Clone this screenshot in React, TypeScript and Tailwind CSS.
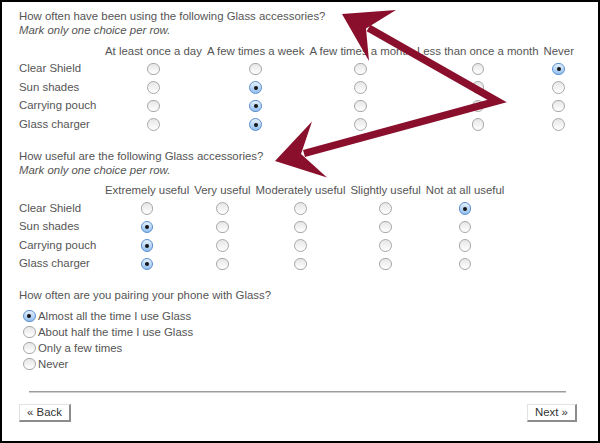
import React from "react";

const Radio = ({ on }: { on?: boolean }) => (
  <span
    className={`inline-flex h-[12.5px] w-[12.5px] items-center justify-center rounded-full border align-middle ${
      on
        ? "border-[#5b8fcf] bg-linear-to-b from-[#e4f0fc] to-[#93c0ef]"
        : "border-[#a8a8a8] bg-linear-to-b from-[#e6e6e6] to-[#ffffff]"
    }`}
  >
    {on && <span className="h-[4px] w-[4px] rounded-full bg-[#151515]" />}
  </span>
);

const Matrix = ({
  cols,
  rows,
}: {
  cols: string[];
  rows: { label: string; pick: number }[];
}) => (
  <table className="mt-[5px] border-collapse">
    <thead>
      <tr className="h-[17px]">
        <th className="w-[83.5px] p-0" />
        {cols.map((c) => (
          <th key={c} className="whitespace-nowrap px-[2.5px] py-0 text-center font-normal">
            {c}
          </th>
        ))}
      </tr>
    </thead>
    <tbody>
      {rows.map((r) => (
        <tr key={r.label} className="h-[18.5px]">
          <td className="w-[83.5px] whitespace-nowrap p-0 text-left">{r.label}</td>
          {cols.map((c, i) => (
            <td key={c} className="p-0 text-center">
              <Radio on={i === r.pick} />
            </td>
          ))}
        </tr>
      ))}
    </tbody>
  </table>
);

const Arrows = () => (
  <svg
    className="pointer-events-none absolute left-[-2px] top-[-2px] h-[443px] w-[600px]"
    viewBox="0 0 600 443"
  >
    <polyline
      points="368.5,28 497,101 304,153.5"
      fill="none"
      stroke="#8a0f2c"
      strokeWidth="7.5"
      strokeLinejoin="miter"
      strokeMiterlimit="6"
    />
    <polygon points="342,14 396,10 366,28.5 369,61" fill="#8a0f2c" />
    <polygon points="275,161 312,121.5 301,154 327,177.5" fill="#8a0f2c" />
  </svg>
);

const App = () => {
  const often = ["At least once a day", "A few times a week", "A few times a month", "Less than once a month", "Never"];
  const useful = ["Extremely useful", "Very useful", "Moderately useful", "Slightly useful", "Not at all useful"];
  const pairing = ["Almost all the time I use Glass", "About half the time I use Glass", "Only a few times", "Never"];

  return (
    <div
      className="relative h-[443px] w-[600px] overflow-hidden border-2 border-black bg-white text-[11.4px] leading-[14px] text-[#555]"
      style={{ fontFamily: '"Liberation Sans", Arial, sans-serif' }}
    >
      <div className="pl-[17px] pr-[21px] pt-[7px]">
        <p>How often have been using the following Glass accessories?</p>
        <p className="italic">Mark only one choice per row.</p>
        <Matrix
          cols={often}
          rows={[
            { label: "Clear Shield", pick: 4 },
            { label: "Sun shades", pick: 1 },
            { label: "Carrying pouch", pick: 1 },
            { label: "Glass charger", pick: 1 },
          ]}
        />

        <p className="mt-[15.5px]">How useful are the following Glass accessories?</p>
        <p className="italic">Mark only one choice per row.</p>
        <Matrix
          cols={useful}
          rows={[
            { label: "Clear Shield", pick: 4 },
            { label: "Sun shades", pick: 0 },
            { label: "Carrying pouch", pick: 0 },
            { label: "Glass charger", pick: 0 },
          ]}
        />

        <p className="mt-[15.5px]">How often are you pairing your phone with Glass?</p>
        <div className="mt-[6px] flex flex-col">
          {pairing.map((p, i) => (
            <div key={p} className="flex h-[16px] items-center gap-[2.5px] pl-[4px]">
              <Radio on={i === 0} />
              <span>{p}</span>
            </div>
          ))}
        </div>

        <div className="ml-[10px] mr-[11px] mt-[18.5px] border-t border-b border-t-[#9c9c9c] border-b-[#cfcfcf]" />

        <div className="mt-[11px] flex justify-between text-[#333]">
          <button className="flex h-[18px] w-[52px] items-center justify-center border-t border-l border-r-2 border-b-2 border-t-[#e2e2e2] border-l-[#e2e2e2] border-r-[#8c8c8c] border-b-[#8c8c8c] bg-white">
            « Back
          </button>
          <button className="flex h-[18px] w-[50px] items-center justify-center border-t border-l border-r-2 border-b-2 border-t-[#e2e2e2] border-l-[#e2e2e2] border-r-[#8c8c8c] border-b-[#8c8c8c] bg-white">
            Next »
          </button>
        </div>
      </div>
      <Arrows />
    </div>
  );
};

export default App;
